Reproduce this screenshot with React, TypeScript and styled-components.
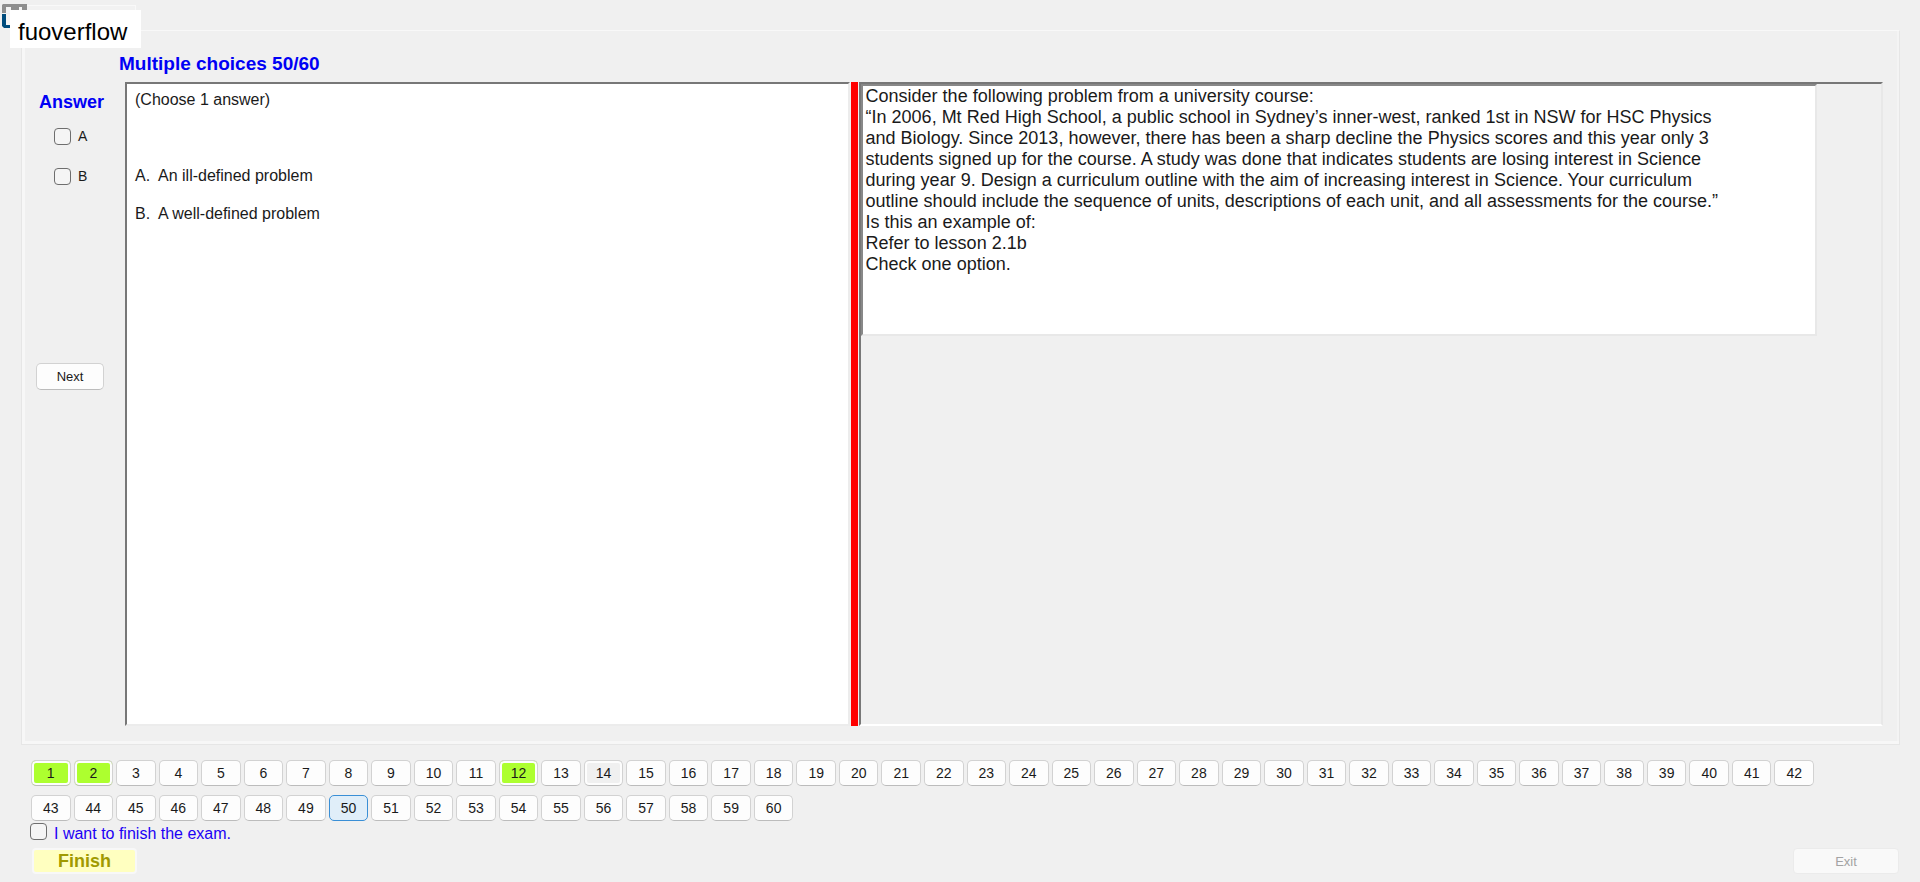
import React, { useState } from "react";
import styled, { createGlobalStyle, css } from "styled-components";

const GlobalStyle = createGlobalStyle`
  *, *::before, *::after { box-sizing: border-box; }
  body { margin: 0; background: #f0f0f0; color: #1a1a1a; font-family: "Liberation Sans", Arial, sans-serif; }
  button, input { font-family: inherit; }
`;

const Window = styled.main`
  position: relative;
  display: flex;
  flex-direction: column;
  min-height: 100vh;
  padding: 30px 20px 8px 21px;
`;

const Logo = styled.svg`
  position: absolute;
  top: 3px;
  left: 2px;
`;

const TitleStrip = styled.div`
  position: absolute;
  top: 5px;
  left: 10px;
  width: 126px;
  height: 10px;
  background: #f2f2f2;
  border-top: 1px solid #f9f9f9;
  border-right: 1px solid #f9f9f9;
`;

const Watermark = styled.div`
  position: absolute;
  top: 10px;
  left: 10px;
  width: 131px;
  height: 38px;
  padding-left: 8px;
  background: #fff;
  color: #000;
  font-size: 24px;
  line-height: 44px;
`;

const Group = styled.section`
  flex: 1;
  display: grid;
  grid-template-columns: 103px minmax(0, 1fr);
  grid-template-rows: 51px minmax(0, 1fr);
  padding: 0 16px 18px 0;
  border: 1px solid #e6e6e6;
  border-top-color: #f8f8f8;
  box-shadow: inset 3px -3px 0 #f7f7f7, inset -2px 0 0 #f4f4f4;
`;

const Heading = styled.h1`
  grid-column: 2;
  margin: 0 0 0 -6px;
  padding-top: 22px;
  color: #0000f5;
  font-size: 19px;
  line-height: 22px;
`;

const AnswerColumn = styled.form`
  display: flex;
  flex-direction: column;
  padding-left: 14px;
`;

const AnswerTitle = styled.h2`
  margin: 9px 0 13px 3px;
  color: #0000f5;
  font-size: 18px;
  line-height: 22px;
`;

const CheckLabel = styled.label`
  display: flex;
  align-items: center;
  gap: 7px;
  width: max-content;
  height: 20px;
  margin: 0 0 20px 18px;
  font-size: 14px;
`;

const Check = styled.input`
  appearance: none;
  flex: none;
  width: 17px;
  height: 17px;
  margin: 0;
  border: 1px solid #6e6e6e;
  border-radius: 4px;
  background: #f5f5f5;
  &:checked { background: #0067c0; border-color: #0067c0; }
`;

const face = css`
  padding: 0;
  border: 1px solid #d2d2d2;
  border-bottom-color: #bcbcbc;
  border-radius: 5px;
  background: #fdfdfd;
  color: #1a1a1a;
`;

const NextButton = styled.button`
  ${face}
  width: 68px;
  height: 27px;
  margin-top: 157px;
  font-size: 13px;
`;

const Panes = styled.div`
  display: grid;
  grid-template-columns: 725fr 7px 1025fr;
  column-gap: 1px;
`;

const Choices = styled.section`
  padding: 6px 8px;
  border: 2px solid #ececec;
  border-top-color: #777;
  border-left-color: #777;
  background: #fff;
  font-size: 16px;
  line-height: 20px;
`;

const Hint = styled.p`
  margin: 0;
`;

const ChoiceList = styled.ol`
  display: flex;
  flex-direction: column;
  gap: 18px;
  margin: 56px 0 0;
  padding: 0;
  list-style: none;
`;

const Choice = styled.li`
  display: flex;
`;

const Letter = styled.span`
  width: 23px;
`;

const Splitter = styled.div`
  background: #f00;
`;

const QuestionPane = styled.section`
  border: 2px solid #e8e8e8;
  border-top-color: #777;
  border-left-color: #777;
  border-bottom-color: #fff;
`;

const Passage = styled.div`
  height: 252px;
  margin-right: 64px;
  padding: 0 3px;
  border: 2px solid #e8e8e8;
  border-top-color: #888;
  border-left-color: #888;
  background: #fff;
  font-size: 18px;
  line-height: 21px;
  white-space: nowrap;
`;

const Line = styled.p`
  margin: 0;
`;

const Navigator = styled.nav`
  display: grid;
  grid-template-columns: repeat(42, minmax(0, 1fr));
  gap: 9px 3px;
  margin: 15px 86px 0 10px;
`;

type State = "plain" | "done" | "seen" | "current";

const fills: Record<State, string> = {
  plain: "#fdfdfd",
  done: "#adff2f",
  seen: "#f0f0f0",
  current: "#e0eef9",
};

const NumberButton = styled.button<{ $state: State }>`
  ${face}
  height: 26px;
  font-size: 14px;
  background: ${(p) => fills[p.$state]};
  ${(p) => (p.$state === "done" || p.$state === "seen") && css`box-shadow: inset 0 0 0 2px #fdfdfd;`}
  ${(p) => p.$state === "current" && css`border-color: #3a8fd6;`}
`;

const FinishLabel = styled(CheckLabel)`
  align-items: flex-start;
  height: 22px;
  margin: 2px 0 3px 9px;
  color: #1c00f5;
  font-size: 16px;
  line-height: 22px;
`;

const Footer = styled.footer`
  display: flex;
  justify-content: space-between;
  padding: 0 1px 0 11px;
`;

const FinishButton = styled.button`
  width: 105px;
  height: 26px;
  padding: 0;
  border: 2px solid #f8f8f8;
  border-radius: 4px;
  background: #ffffc0;
  color: #a09a00;
  font-size: 18px;
  font-weight: bold;
  line-height: 22px;
`;

const ExitButton = styled.button`
  width: 106px;
  height: 26px;
  padding: 0;
  border: 1px solid #ebebeb;
  border-radius: 4px;
  background: #f9f9f9;
  color: #a3a3a3;
  font-size: 13px;
`;

const passage = [
  "Consider the following problem from a university course:",
  "“In 2006, Mt Red High School, a public school in Sydney’s inner-west, ranked 1st in NSW for HSC Physics",
  "and Biology. Since 2013, however, there has been a sharp decline the Physics scores and this year only 3",
  "students signed up for the course. A study was done that indicates students are losing interest in Science",
  "during year 9. Design a curriculum outline with the aim of increasing interest in Science. Your curriculum",
  "outline should include the sequence of units, descriptions of each unit, and all assessments for the course.”",
  "Is this an example of:",
  "Refer to lesson 2.1b",
  "Check one option.",
];

const choices = [
  { letter: "A", text: "An ill-defined problem" },
  { letter: "B", text: "A well-defined problem" },
];

const done = [1, 2, 12];
const seen = [14];

export default function App() {
  const [current, setCurrent] = useState(50);

  const stateOf = (n: number): State =>
    n === current ? "current" : done.includes(n) ? "done" : seen.includes(n) ? "seen" : "plain";

  return (
    <>
      <GlobalStyle />
      <Window>
        <TitleStrip />
        <Logo width="26" height="26" viewBox="0 0 26 26" aria-hidden="true">
          <path d="M1 1H25V8H0V2Z" fill="#8e8e8e" />
          <path d="M0 8H9V10H0Z" fill="#8e8e8e" />
          <path d="M0 11H9V25H2L0 23Z" fill="#004b7c" />
          <path d="M4 4H9V10H4ZM17 4H20V8H17Z" fill="#f4f4f4" />
          <path d="M4 11H9V22H4Z" fill="#f4f4f4" />
        </Logo>
        <Watermark>fuoverflow</Watermark>

        <Group>
          <Heading>Multiple choices {current}/60</Heading>
          <AnswerColumn>
            <AnswerTitle>Answer</AnswerTitle>
            {choices.map((c) => (
              <CheckLabel key={c.letter}>
                <Check type="checkbox" />
                {c.letter}
              </CheckLabel>
            ))}
            <NextButton type="button" onClick={() => setCurrent((n) => (n % 60) + 1)}>
              Next
            </NextButton>
          </AnswerColumn>
          <Panes>
            <Choices>
              <Hint>(Choose 1 answer)</Hint>
              <ChoiceList>
                {choices.map((c) => (
                  <Choice key={c.letter}>
                    <Letter>{c.letter}.</Letter>
                    {c.text}
                  </Choice>
                ))}
              </ChoiceList>
            </Choices>
            <Splitter />
            <QuestionPane>
              <Passage>
                {passage.map((line) => (
                  <Line key={line}>{line}</Line>
                ))}
              </Passage>
            </QuestionPane>
          </Panes>
        </Group>

        <Navigator aria-label="Questions">
          {Array.from({ length: 60 }, (_, i) => i + 1).map((n) => (
            <NumberButton key={n} type="button" $state={stateOf(n)} onClick={() => setCurrent(n)}>
              {n}
            </NumberButton>
          ))}
        </Navigator>
        <FinishLabel>
          <Check type="checkbox" />
          I want to finish the exam.
        </FinishLabel>
        <Footer>
          <FinishButton type="button" disabled>Finish</FinishButton>
          <ExitButton type="button" disabled>Exit</ExitButton>
        </Footer>
      </Window>
    </>
  );
}
